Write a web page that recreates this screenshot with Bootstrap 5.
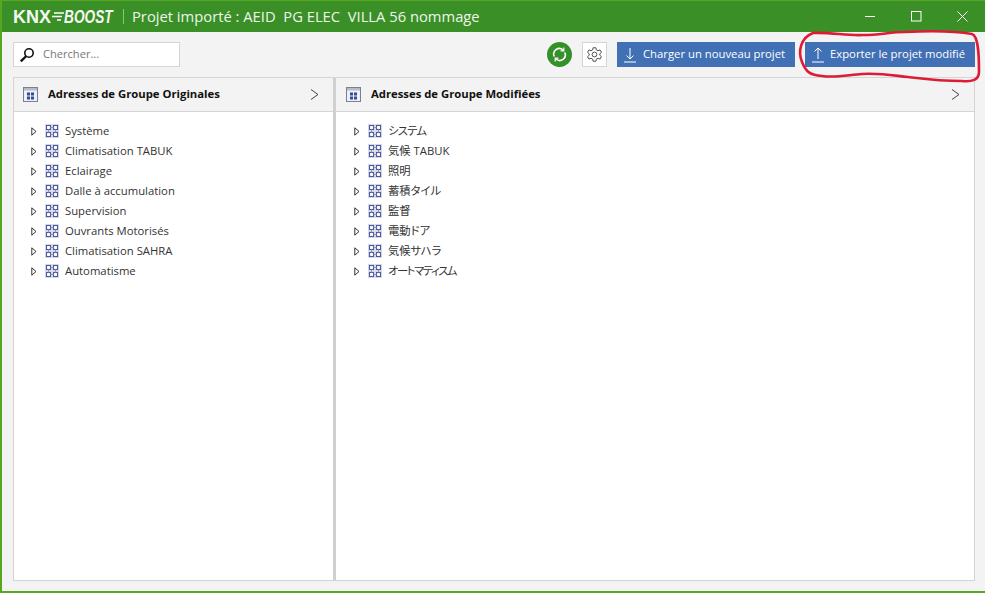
<!DOCTYPE html>
<html lang="fr">
<head>
<meta charset="utf-8">
<title>KNX Boost</title>
<link href="https://cdn.jsdelivr.net/npm/bootstrap@5.3.0/dist/css/bootstrap.min.css" rel="stylesheet">
<style>
html,body{height:100%;margin:0;overflow:hidden}
body{font-family:"Open Sans","Noto Sans CJK JP",sans-serif;font-size:11.3px;color:#222;background:#fff}
.appwin{width:985px;height:593px;border:solid #55a820;border-width:1px 0 2px 2px;background:#f3f3f3;position:relative;overflow:hidden}
.titlebar{height:31px;background:#3a8f27;color:#fff;border-left:1px solid #3a8f27}
.logoword{font-family:"Liberation Sans",sans-serif;font-weight:700;font-size:18px;line-height:1;width:99px;flex:none;margin-left:10px;white-space:nowrap;color:#f4f9f1}
.logoword svg{flex:none}
.logoboost{font-style:italic;display:inline-block;transform:scaleX(.76);transform-origin:0 50%}
.titlesep{width:1px;height:15px;background:#8cc27e;margin:0 8px 0 11px;flex:none}
.titletext{font-size:14.75px;color:#eef6ea;white-space:pre}
.winbtn{width:46px;height:31px;flex:none}
.toolbar{height:45px;padding:10px 10px 0 11px}
.searchbox{width:167px;height:25px;background:#fff;border:1px solid #d5d5d5;color:#777;padding-left:5px}
.searchbox span{margin-left:8px;font-size:11.1px}
.syncbtn{width:25px;height:25px;border-radius:50%;background:#35902a;margin-right:10px}
.gearbtn{width:25px;height:25px;background:#fff;border:1px solid #d5d5d5;margin-right:10px}
.bluebtn{height:25px;background:#4170b5;color:#fff;font-size:11.3px;white-space:nowrap}
.loadbtn{width:178px;padding-left:7px;margin-right:10px}
.exportbtn{width:170px;padding-left:7px}
.bluebtn span{margin-left:7px}
.exportbtn span{margin-left:6px}
.panels{height:504px;margin:0 10px 0 11px;border:1px solid #d5d5d5;background:#fff}
.pane-left{width:319px;flex:none}
.pane-right{flex:1 1 auto;min-width:0}
.splitbar{width:3px;background:#d0d0d0;flex:none}
.panehead{height:34px;padding:0 14px 0 9px;background:#f3f3f3;border-bottom:1px solid #d5d5d5;font-weight:700;color:#111;font-size:11.3px}
.pane-right .panehead{padding-left:10px}
.panehead b{margin-left:10px;font-weight:700;flex:1 1 auto}
.treelist{list-style:none;margin:0;padding:9px 0 0 17px}
.treelist li{height:20px;display:flex;align-items:center;color:#333;white-space:nowrap}
.treelist svg.arrow{margin-right:8px}
.treelist svg.node{margin-right:6px}
.pane-right .treelist{padding-left:18px;font-feature-settings:"palt"}
.kana-tight{letter-spacing:-.7px}
.kana-tighter{letter-spacing:-1.4px}
.scribble{position:absolute;left:-2px;top:-1px;pointer-events:none}
</style>
</head>
<body>
<svg width="0" height="0" class="d-block position-absolute">
  <defs>
    <symbol id="ico-node" viewBox="0 0 14 14">
      <rect width="14" height="14" fill="#dcdde8"/>
      <g fill="#fff" stroke="#4c5a9e" stroke-width="1.1">
        <rect x="1.500" y="1.500" width="4" height="4"/><rect x="8.500" y="1.500" width="4" height="4"/>
        <rect x="1.500" y="8.500" width="4" height="4"/><rect x="8.500" y="8.500" width="4" height="4"/>
      </g>
      <path d="M5.500 3.500h3M5.500 10.500h3M3.500 5.500v3M10.500 5.500v3" stroke="#8d95c0" fill="none"/>
    </symbol>
    <symbol id="ico-arrow" viewBox="0 0 6 9">
      <path d="M.8.8 5 4.500.8 8.200Z" fill="#fff" stroke="#333" stroke-width="1"/>
    </symbol>
    <symbol id="ico-grid" viewBox="0 0 15 15">
      <rect x=".5" y=".5" width="14" height="14" fill="#eef0f6" stroke="#7c7f8d"/>
      <rect x="1" y="1" width="13" height="2.500" fill="#b9bcc8"/>
      <g fill="#2f4d9f"><rect x="4" y="5.500" width="3" height="3"/><rect x="8" y="5.500" width="3" height="3"/><rect x="4" y="9.500" width="3" height="3"/><rect x="8" y="9.500" width="3" height="3"/></g>
    </symbol>
  </defs>
</svg>
<div class="appwin d-flex flex-column">
  <header class="titlebar d-flex align-items-center">
    <div class="logoword d-flex align-items-center">KNX<svg width="13" height="11" viewBox="0 0 13 11"><path d="M3 2h10M1 5.500h10M6 9h4" stroke="#fff" stroke-width="1.700"/></svg><span class="logoboost">BOOST</span></div>
    <div class="titlesep"></div>
    <div class="titletext flex-grow-1">Projet importé : AEID  PG ELEC  VILLA 56 nommage</div>
    <div class="winbtn d-flex align-items-center justify-content-center"><svg width="11" height="11" viewBox="0 0 11 11"><path d="M0 5.500h10" stroke="#fff"/></svg></div>
    <div class="winbtn d-flex align-items-center justify-content-center"><svg width="11" height="11" viewBox="0 0 11 11"><rect x=".5" y=".5" width="9.500" height="9.500" fill="none" stroke="#fff"/></svg></div>
    <div class="winbtn d-flex align-items-center justify-content-center"><svg width="11" height="11" viewBox="0 0 11 11"><path d="M.5.5l10 10M10.500.5l-10 10" stroke="#fff"/></svg></div>
  </header>
  <div class="toolbar d-flex align-items-start">
    <div class="searchbox d-flex align-items-center">
      <svg width="16" height="16" viewBox="0 0 16 16"><circle cx="10" cy="6" r="4.200" fill="none" stroke="#111" stroke-width="1.600"/><path d="M7 9.200 1.800 14.400" stroke="#111" stroke-width="2.200"/></svg>
      <span>Chercher...</span>
    </div>
    <div class="ms-auto syncbtn d-flex align-items-center justify-content-center">
      <svg width="15" height="15" viewBox="0 0 15 15" fill="none" stroke="#fff" stroke-width="1.600"><path d="M2.200 9.500A5.600 5.600 0 0 1 11 3"/><path d="M12.800 5.500A5.600 5.600 0 0 1 4 12"/><path d="M11.800.6V3.800H8.600M3.200 14.400V11.200H6.400" stroke-width="1.200"/></svg>
    </div>
    <div class="gearbtn d-flex align-items-center justify-content-center">
      <svg width="17" height="17" viewBox="0 0 24 24" fill="none" stroke="#444" stroke-width="1.300"><circle cx="12" cy="12" r="3.400"/><path d="M10 2.500h4l.6 3 2.400 1.200 2.800-1.200 2 3.400-2.300 2v2.200l2.300 2-2 3.400-2.800-1.200-2.400 1.200-.6 3h-4l-.6-3L7 17.300l-2.800 1.200-2-3.400 2.300-2v-2.200l-2.300-2 2-3.400L7 6.700l2.400-1.200z"/></svg>
    </div>
    <div class="bluebtn loadbtn d-flex align-items-center">
      <svg width="12" height="16" viewBox="0 0 12 16" fill="none" stroke="#fff"><path d="M6 1v11M2.500 8.500 6 12l3.500-3.500M0 15h12"/></svg>
      <span>Charger un nouveau projet</span>
    </div>
    <div class="bluebtn exportbtn d-flex align-items-center">
      <svg width="12" height="16" viewBox="0 0 12 16" fill="none" stroke="#fff"><path d="M6 12V1M2.500 4.500 6 1l3.500 3.500M0 15h12"/></svg>
      <span>Exporter le projet modifié</span>
    </div>
  </div>
  <main class="panels d-flex">
    <section class="pane-left">
      <div class="panehead d-flex align-items-center">
        <svg width="15" height="15"><use href="#ico-grid"/></svg>
        <b>Adresses de Groupe Originales</b>
        <svg width="9" height="11" viewBox="0 0 9 11" fill="none" stroke="#444"><path d="M1 .5 8 5.500 1 10.500"/></svg>
      </div>
      <ul class="treelist">
        <li><svg class="arrow" width="6" height="9"><use href="#ico-arrow"/></svg><svg class="node" width="14" height="14"><use href="#ico-node"/></svg>Système</li>
        <li><svg class="arrow" width="6" height="9"><use href="#ico-arrow"/></svg><svg class="node" width="14" height="14"><use href="#ico-node"/></svg>Climatisation TABUK</li>
        <li><svg class="arrow" width="6" height="9"><use href="#ico-arrow"/></svg><svg class="node" width="14" height="14"><use href="#ico-node"/></svg>Eclairage</li>
        <li><svg class="arrow" width="6" height="9"><use href="#ico-arrow"/></svg><svg class="node" width="14" height="14"><use href="#ico-node"/></svg>Dalle à accumulation</li>
        <li><svg class="arrow" width="6" height="9"><use href="#ico-arrow"/></svg><svg class="node" width="14" height="14"><use href="#ico-node"/></svg>Supervision</li>
        <li><svg class="arrow" width="6" height="9"><use href="#ico-arrow"/></svg><svg class="node" width="14" height="14"><use href="#ico-node"/></svg>Ouvrants Motorisés</li>
        <li><svg class="arrow" width="6" height="9"><use href="#ico-arrow"/></svg><svg class="node" width="14" height="14"><use href="#ico-node"/></svg>Climatisation SAHRA</li>
        <li><svg class="arrow" width="6" height="9"><use href="#ico-arrow"/></svg><svg class="node" width="14" height="14"><use href="#ico-node"/></svg>Automatisme</li>
      </ul>
    </section>
    <div class="splitbar"></div>
    <section class="pane-right">
      <div class="panehead d-flex align-items-center">
        <svg width="15" height="15"><use href="#ico-grid"/></svg>
        <b>Adresses de Groupe Modifiées</b>
        <svg width="9" height="11" viewBox="0 0 9 11" fill="none" stroke="#444"><path d="M1 .5 8 5.500 1 10.500"/></svg>
      </div>
      <ul class="treelist">
        <li><svg class="arrow" width="6" height="9"><use href="#ico-arrow"/></svg><svg class="node" width="14" height="14"><use href="#ico-node"/></svg><span class="kana-tight">システム</span></li>
        <li><svg class="arrow" width="6" height="9"><use href="#ico-arrow"/></svg><svg class="node" width="14" height="14"><use href="#ico-node"/></svg>気候 TABUK</li>
        <li><svg class="arrow" width="6" height="9"><use href="#ico-arrow"/></svg><svg class="node" width="14" height="14"><use href="#ico-node"/></svg>照明</li>
        <li><svg class="arrow" width="6" height="9"><use href="#ico-arrow"/></svg><svg class="node" width="14" height="14"><use href="#ico-node"/></svg>蓄積タイル</li>
        <li><svg class="arrow" width="6" height="9"><use href="#ico-arrow"/></svg><svg class="node" width="14" height="14"><use href="#ico-node"/></svg>監督</li>
        <li><svg class="arrow" width="6" height="9"><use href="#ico-arrow"/></svg><svg class="node" width="14" height="14"><use href="#ico-node"/></svg>電動ドア</li>
        <li><svg class="arrow" width="6" height="9"><use href="#ico-arrow"/></svg><svg class="node" width="14" height="14"><use href="#ico-node"/></svg>気候サハラ</li>
        <li><svg class="arrow" width="6" height="9"><use href="#ico-arrow"/></svg><svg class="node" width="14" height="14"><use href="#ico-node"/></svg><span class="kana-tighter">オートマティスム</span></li>
      </ul>
    </section>
  </main>
  <svg class="scribble" width="985" height="593" viewBox="0 0 985 593" fill="none">
    <path d="M813 33C830 32 848 36 863 35C880 35 890 32 905 32C925 31 955 31 972 34C979 36 979 60 979 72C979 80 972 82 962 81C940 81 925 79 908 77C890 75 880 73 862 74C848 75 835 78 822 76C810 75 806 72 802 62C798 52 800 38 813 33Z" stroke="#dc1c36" stroke-width="2.600"/>
  </svg>
</div>
</body>
</html>
